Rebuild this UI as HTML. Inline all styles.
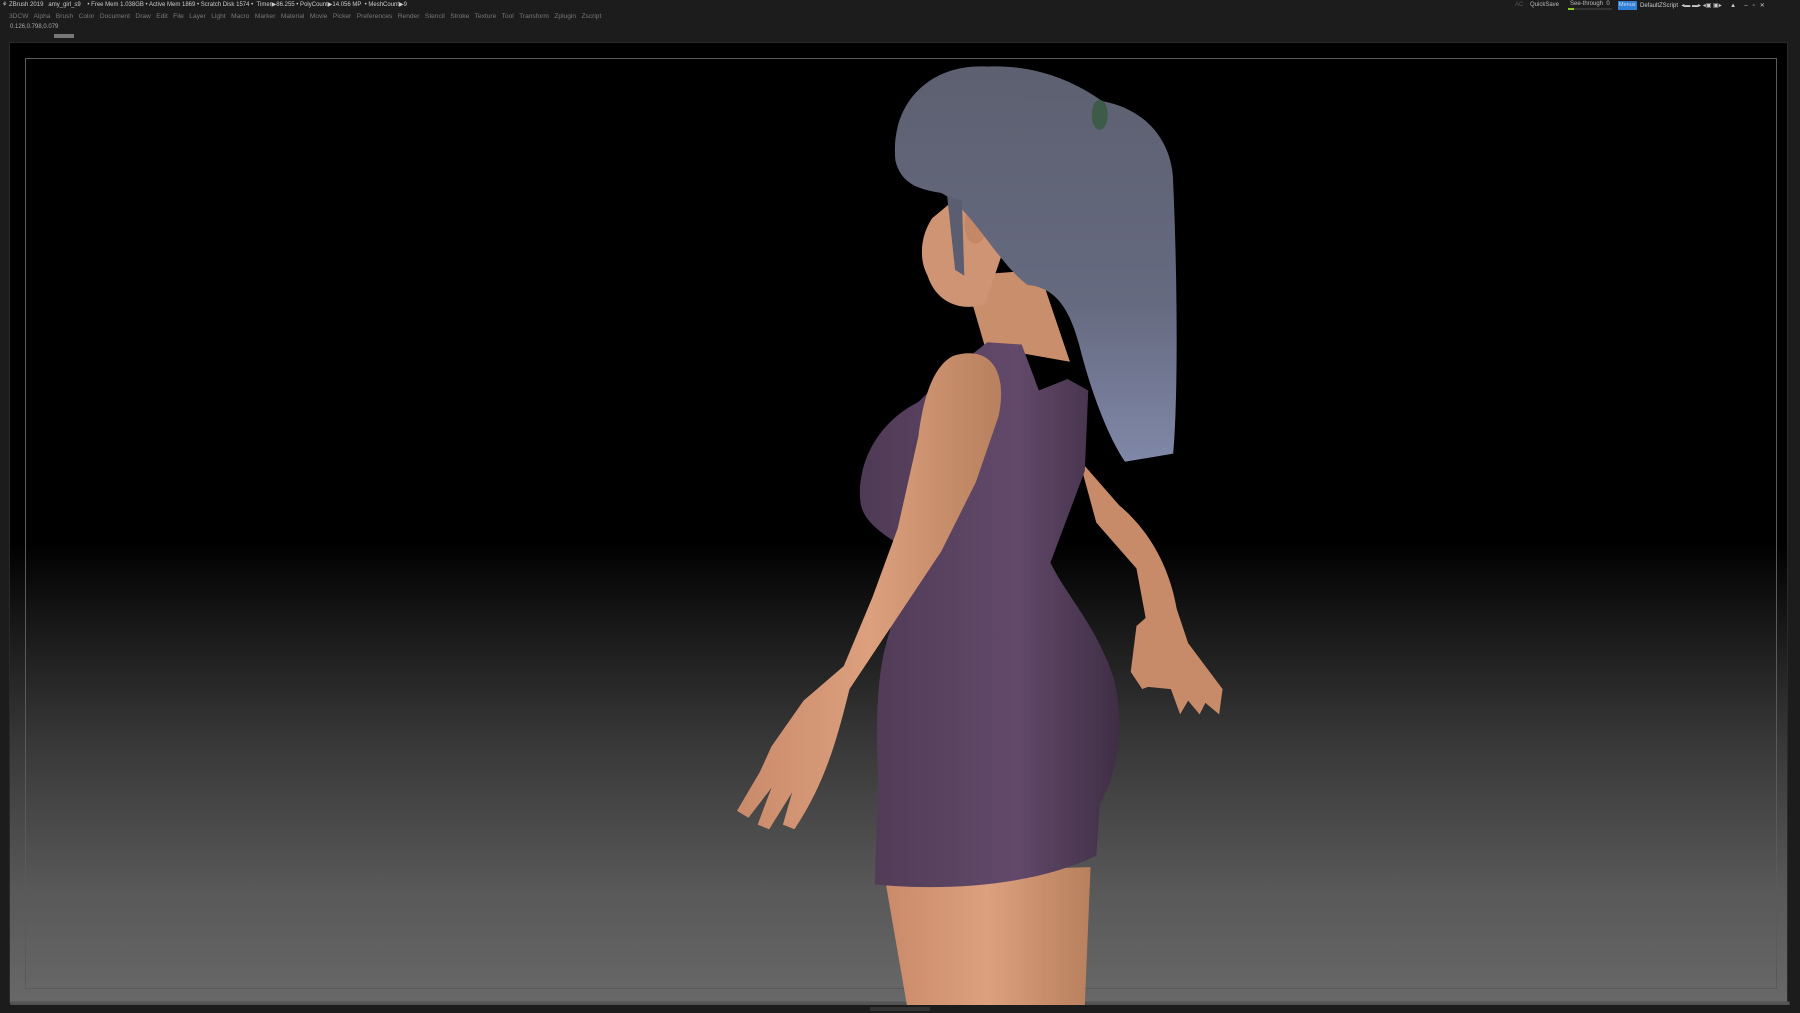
<!DOCTYPE html>
<html><head><meta charset="utf-8"><style>
*{margin:0;padding:0;box-sizing:border-box}
body{width:1800px;height:1013px;background:#1c1c1c;overflow:hidden;position:relative;font-family:"Liberation Sans",sans-serif;color:#aaa}
.t{position:absolute;white-space:nowrap;font-size:6px}
#vp{position:absolute;left:9px;top:42px;width:1779px;height:962px;background:linear-gradient(#000 0%,#000 52%,#161616 60%,#383838 73%,#585858 88%,#686868 100%);border:1px solid #2a2a2a}
#inner{position:absolute;left:25px;top:58px;width:1752px;height:931px;border:1px solid #5a5a5a}
</style></head><body>
<div class="t" style="left:2px;top:1px;color:#ccc;font-size:6px">⚘ ZBrush 2019 &nbsp; amy_girl_s9 &nbsp; &nbsp;• Free Mem 1.038GB • Active Mem 1869 • Scratch Disk 1574 • &nbsp;Timer▶86.255 • PolyCount▶14.056 MP &nbsp;• MeshCount▶9</div>
<div class="t" style="left:9px;top:13px;color:#777;font-size:6.6px">3DCW &nbsp; Alpha &nbsp; Brush &nbsp; Color &nbsp; Document &nbsp; Draw &nbsp; Edit &nbsp; File &nbsp; Layer &nbsp; Light &nbsp; Macro &nbsp; Marker &nbsp; Material &nbsp; Movie &nbsp; Picker &nbsp; Preferences &nbsp; Render &nbsp; Stencil &nbsp; Stroke &nbsp; Texture &nbsp; Tool &nbsp; Transform &nbsp; Zplugin &nbsp; Zscript</div>
<div class="t" style="left:10px;top:24px;color:#aaa;font-size:6px">0.126,0.798,0.079</div>
<div style="position:absolute;left:54px;top:34px;width:20px;height:4px;background:#777"></div>
<div class="t" style="left:1515px;top:2px;color:#555">AC</div>
<div class="t" style="left:1530px;top:2px;color:#bbb">QuickSave</div>
<div class="t" style="left:1570px;top:1px;color:#bbb">See-through &nbsp;0</div>
<div style="position:absolute;left:1568px;top:8px;width:44px;height:2px;background:#333"></div>
<div style="position:absolute;left:1568px;top:8px;width:6px;height:2px;background:#8c2"></div>
<div style="position:absolute;left:1618px;top:1px;width:19px;height:9px;background:#2f7fd6"></div>
<div class="t" style="left:1619px;top:2px;color:#cde;font-size:5.5px">Menus</div>
<div class="t" style="left:1640px;top:2px;color:#ccc">DefaultZScript &nbsp;◂▬ ▬▸ ◂▣ ▣▸ &nbsp; &nbsp; ▲ &nbsp; &nbsp; – &nbsp; ▫ &nbsp; ✕</div>
<div id="vp"></div>
<div id="inner"></div>
<svg style="position:absolute;left:0;top:0" width="1800" height="1013" viewBox="0 0 1568 882" preserveAspectRatio="none">
<defs>
<linearGradient id="sk" x1="0" x2="1"><stop offset="0" stop-color="#c98a6a"/><stop offset=".5" stop-color="#dca07e"/><stop offset="1" stop-color="#b8805e"/></linearGradient>
<linearGradient id="dr" x1="0" x2="1"><stop offset="0" stop-color="#4f3a55"/><stop offset=".6" stop-color="#62496a"/><stop offset="1" stop-color="#3f2e45"/></linearGradient>
<linearGradient id="hr" x1="0" y1="0" x2="0" y2="1"><stop offset="0" stop-color="#5d6070"/><stop offset=".6" stop-color="#666a80"/><stop offset="1" stop-color="#8088a8"/></linearGradient>
</defs>
<rect x="9" y="872" width="1550" height="3" fill="#555"/>
<path d="M770,760 L950,755 L945,875 L790,875 Z" fill="url(#sk)"/>
<path d="M940,400 L975,440 C1005,465 1020,500 1025,530 L1035,560 L1065,600 L1062,622 L1050,612 L1045,622 L1035,610 L1028,622 L1020,600 L1000,598 L995,600 L985,585 L990,545 L998,538 L990,495 L955,455 Z" fill="#c78b69"/>
<path d="M840,240 L905,235 L932,315 L858,302 Z" fill="#c98e6c"/>
<path d="M812,190 C802,205 800,225 808,240 C815,262 835,272 858,265 L875,215 L830,175 Z" fill="#cf9473"/>
<ellipse cx="850" cy="195" rx="10" ry="17" fill="#c48866"/>
<path d="M800,350 C760,370 745,410 750,440 C755,460 780,470 790,480 L775,550 C765,580 762,620 765,680 L762,770 C820,776 900,772 955,745 L958,700 C975,670 980,630 970,590 C955,545 930,520 915,490 L945,410 L948,340 L930,330 L905,340 L890,300 L860,298 C845,310 820,330 800,350 Z" fill="url(#dr)"/>
<path d="M830,310 C862,300 878,322 870,362 L850,420 L820,480 L780,540 L740,600 C730,640 720,680 692,722 L682,718 L690,690 L670,722 L660,718 L672,686 L652,712 L642,706 L662,672 L672,650 L700,610 L735,580 L760,520 L782,460 L800,380 C805,340 815,318 830,310 Z" fill="url(#sk)"/>
<path d="M780,140 C775,90 810,55 860,58 C900,56 935,70 960,88 C1000,95 1022,125 1022,160 C1026,250 1026,350 1022,395 L980,402 C965,380 950,340 940,300 C930,262 915,250 895,248 C870,230 845,180 820,168 C800,165 785,160 780,140 Z" fill="url(#hr)"/>
<path d="M825,170 L832,235 L840,240 L838,175 Z" fill="#5a5e70"/>
<ellipse cx="958" cy="100" rx="7" ry="13" fill="#3e5a48"/>
</svg>
<div style="position:absolute;left:870px;top:1007px;width:60px;height:4px;background:#333"></div>
</body></html>
